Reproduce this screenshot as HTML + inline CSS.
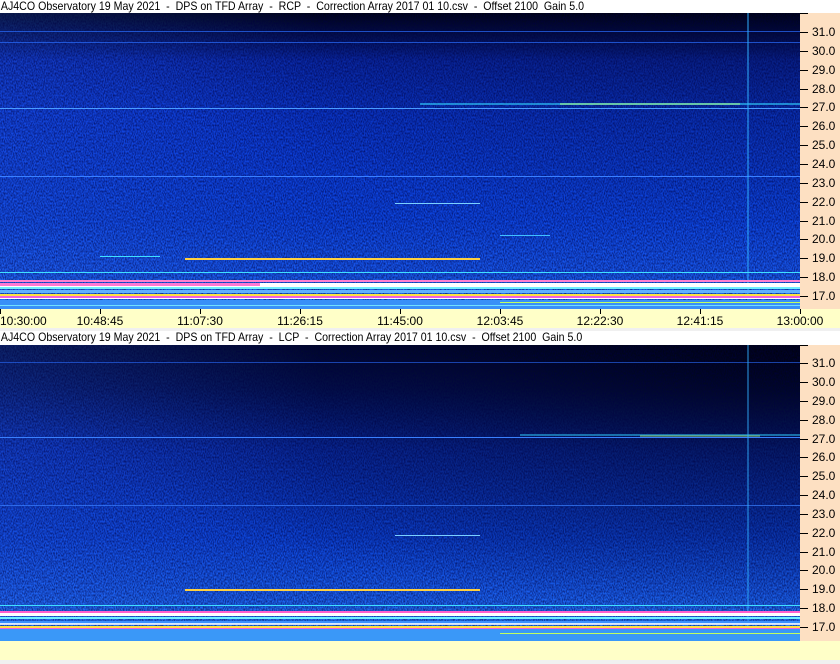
<!DOCTYPE html>
<html><head><style>
html,body{margin:0;padding:0;width:840px;height:664px;overflow:hidden;background:#f0f0f0;font-family:"Liberation Sans",Arial,sans-serif;}
.t{position:absolute;left:0;width:840px;height:13px;background:#fff;font-size:12px;line-height:13px;color:#000;white-space:pre;}
.t span{display:inline-block;padding-left:1px;transform:scaleX(0.885);transform-origin:0 0;}
.ax{position:absolute;left:800px;width:40px;background:#fde0c2;}
.lab{position:absolute;left:812px;font-size:12px;line-height:12px;color:#000;}
.tk{position:absolute;left:800px;width:8px;height:1px;background:#000;}
.time{position:absolute;left:0;width:840px;height:19px;background:#ffffc8;}
.tl{position:absolute;top:6px;font-size:12px;line-height:13px;transform:translateX(-50%);}
.vt{position:absolute;top:0;width:1px;height:5px;background:#000;}
</style></head><body>
<div class="t" style="top:0"><span>AJ4CO Observatory 19 May 2021  -  DPS on TFD Array  -  RCP  -  Correction Array 2017 01 10.csv  -  Offset 2100  Gain 5.0</span></div>

<svg style="position:absolute;left:0;top:13px" width="800" height="296">
<defs>
<linearGradient id="g1" x1="0" y1="0" x2="0" y2="1">
<stop offset="0" stop-color="#010414"/><stop offset="0.06" stop-color="#030e48"/><stop offset="0.16" stop-color="#0a2cb4"/><stop offset="0.35" stop-color="#0b3ad4"/><stop offset="0.7" stop-color="#0d46e0"/><stop offset="0.88" stop-color="#1858ec"/><stop offset="1" stop-color="#2a80f4"/>
</linearGradient>
<radialGradient id="r1" cx="1" cy="0" r="0.9" gradientTransform="scale(1,0.8)">
<stop offset="0" stop-color="#000010" stop-opacity="0.35"/><stop offset="1" stop-color="#000010" stop-opacity="0"/>
</radialGradient>
<linearGradient id="l1" x1="0" y1="0" x2="1" y2="0">
<stop offset="0" stop-color="#3070ff" stop-opacity="0.25"/><stop offset="0.4" stop-color="#3070ff" stop-opacity="0"/>
</linearGradient>
<filter id="n"><feTurbulence type="fractalNoise" baseFrequency="0.9 0.5" numOctaves="1" seed="3"/><feColorMatrix values="0 0 0 0 0  0 0 0 0 0  0 0 0 0 0.05  0 0 0 -2.2 1.5"/></filter>
</defs>
<rect width="800" height="296" fill="url(#g1)"/>
<rect width="800" height="296" fill="url(#r1)"/>
<rect width="800" height="296" fill="url(#l1)"/>
<rect width="800" height="296" filter="url(#n)" opacity="0.6"/>
<rect y="18" width="800" height="1" fill="#2a6cff" opacity=".7"/>
<rect y="29" width="800" height="1" fill="#2a6cff" opacity=".7"/>
<rect y="95" width="800" height="1" fill="#4a9cff"/>
<rect x="420" y="90" width="380" height="2" fill="#30d0ff" opacity=".6"/>
<rect x="560" y="90" width="180" height="2" fill="#b0ff80" opacity=".5"/>
<rect y="163" width="800" height="1" fill="#3a80ff"/>
<rect x="395" y="190" width="85" height="1" fill="#7ad0ff"/>
<rect x="185" y="245" width="295" height="2" fill="#ffd040"/>
<rect x="100" y="243" width="60" height="1" fill="#40e0ff"/>
<rect x="500" y="222" width="50" height="1" fill="#40c0ff"/>
<rect x="747" y="0" width="2" height="296" fill="#30b0ff" opacity=".5"/>
<rect y="259" width="800" height="1" fill="#40e0ff"/>
<rect y="267" width="800" height="2" fill="#ff80d0"/>
<rect y="270" width="800" height="4" fill="#ffffff"/>
<rect y="274" width="800" height="2" fill="#70f0ff"/>
<rect x="0" y="270" width="260" height="3" fill="#ff40c0" opacity=".7"/>
<rect y="277" width="800" height="3" fill="#60b0ff"/>
<rect y="281" width="800" height="2" fill="#ffe040"/>
<rect y="283" width="800" height="2" fill="#f060e0"/>
<rect y="285" width="800" height="1" fill="#ffffff"/>
<rect y="287" width="800" height="9" fill="#3890f8"/>
<rect x="500" y="289" width="300" height="1" fill="#c0ff60"/>
<rect y="292" width="800" height="1" fill="#70e0ff"/>
</svg>
<div class="ax" style="top:13px;height:296px"></div>
<div class="tk" style="top:13px"></div>
<div class="tk" style="top:32px"></div><div class="lab" style="top:26px">31.0</div>
<div class="tk" style="top:51px"></div><div class="lab" style="top:45px">30.0</div>
<div class="tk" style="top:70px"></div><div class="lab" style="top:64px">29.0</div>
<div class="tk" style="top:89px"></div><div class="lab" style="top:83px">28.0</div>
<div class="tk" style="top:107px"></div><div class="lab" style="top:101px">27.0</div>
<div class="tk" style="top:126px"></div><div class="lab" style="top:120px">26.0</div>
<div class="tk" style="top:145px"></div><div class="lab" style="top:139px">25.0</div>
<div class="tk" style="top:164px"></div><div class="lab" style="top:158px">24.0</div>
<div class="tk" style="top:183px"></div><div class="lab" style="top:177px">23.0</div>
<div class="tk" style="top:202px"></div><div class="lab" style="top:196px">22.0</div>
<div class="tk" style="top:221px"></div><div class="lab" style="top:215px">21.0</div>
<div class="tk" style="top:239px"></div><div class="lab" style="top:233px">20.0</div>
<div class="tk" style="top:258px"></div><div class="lab" style="top:252px">19.0</div>
<div class="tk" style="top:277px"></div><div class="lab" style="top:271px">18.0</div>
<div class="tk" style="top:296px"></div><div class="lab" style="top:290px">17.0</div>

<div class="time" style="top:309px">
<div class="vt" style="left:0"></div><div class="vt" style="left:100px"></div><div class="vt" style="left:200px"></div><div class="vt" style="left:300px"></div><div class="vt" style="left:400px"></div><div class="vt" style="left:500px"></div><div class="vt" style="left:600px"></div><div class="vt" style="left:700px"></div><div class="vt" style="left:800px"></div>
<div class="tl" style="left:0;transform:none">10:30:00</div>
<div class="tl" style="left:100px">10:48:45</div>
<div class="tl" style="left:200px">11:07:30</div>
<div class="tl" style="left:300px">11:26:15</div>
<div class="tl" style="left:400px">11:45:00</div>
<div class="tl" style="left:500px">12:03:45</div>
<div class="tl" style="left:600px">12:22:30</div>
<div class="tl" style="left:700px">12:41:15</div>
<div class="tl" style="left:800px">13:00:00</div>
</div>

<div class="t" style="top:331px;height:14px"><span>AJ4CO Observatory 19 May 2021  -  DPS on TFD Array  -  LCP  -  Correction Array 2017 01 10.csv  -  Offset 2100  Gain 5.0</span></div>

<svg style="position:absolute;left:0;top:345px" width="800" height="296">
<defs>
<linearGradient id="g2" x1="0" y1="0" x2="0" y2="1">
<stop offset="0" stop-color="#020a34"/><stop offset="0.15" stop-color="#041560"/><stop offset="0.35" stop-color="#0a30b4"/><stop offset="0.65" stop-color="#0c44d8"/><stop offset="0.85" stop-color="#1a60ee"/><stop offset="1" stop-color="#2a88f8"/>
</linearGradient>
<radialGradient id="r2" cx="1" cy="0" r="1" gradientTransform="scale(1,0.9)">
<stop offset="0" stop-color="#000008" stop-opacity="0.8"/><stop offset="0.5" stop-color="#000008" stop-opacity="0.35"/><stop offset="1" stop-color="#000008" stop-opacity="0"/>
</radialGradient>
</defs>
<rect width="800" height="296" fill="url(#g2)"/>
<rect width="800" height="296" fill="url(#r2)"/>
<rect width="800" height="296" fill="url(#l1)"/>
<rect width="800" height="296" filter="url(#n)" opacity="0.6"/>
<rect y="17" width="800" height="1" fill="#2a6cff" opacity=".6"/>
<rect y="92" width="800" height="1" fill="#3a80ff"/>
<rect x="520" y="89" width="280" height="2" fill="#30d0ff" opacity=".5"/>
<rect x="640" y="90" width="120" height="2" fill="#b0ff80" opacity=".4"/>
<rect y="160" width="800" height="1" fill="#3a80ff" opacity=".7"/>
<rect x="395" y="190" width="85" height="1" fill="#7ad0ff"/>
<rect x="185" y="244" width="295" height="2" fill="#ffd040"/>
<rect x="747" y="0" width="2" height="296" fill="#30b0ff" opacity=".45"/>
<rect y="260" width="800" height="1" fill="#40e0ff"/>
<rect y="266" width="800" height="2" fill="#ff60d0"/>
<rect y="268" width="800" height="3" fill="#ffffff"/>
<rect y="272" width="800" height="2" fill="#70f0ff"/>
<rect y="276" width="800" height="3" fill="#3a90ff"/>
<rect y="278" width="800" height="2" fill="#ffffff" opacity=".8"/>
<rect y="281" width="800" height="2" fill="#ffe040"/>
<rect y="283" width="800" height="1" fill="#f060e0"/>
<rect y="284" width="800" height="12" fill="#3a98f8"/>
<rect x="500" y="288" width="300" height="1" fill="#c0ff60"/>
</svg>
<div class="ax" style="top:345px;height:296px"></div>
<div class="tk" style="top:345px"></div>
<div class="tk" style="top:363px"></div><div class="lab" style="top:357px">31.0</div>
<div class="tk" style="top:382px"></div><div class="lab" style="top:376px">30.0</div>
<div class="tk" style="top:401px"></div><div class="lab" style="top:395px">29.0</div>
<div class="tk" style="top:420px"></div><div class="lab" style="top:414px">28.0</div>
<div class="tk" style="top:439px"></div><div class="lab" style="top:433px">27.0</div>
<div class="tk" style="top:457px"></div><div class="lab" style="top:451px">26.0</div>
<div class="tk" style="top:476px"></div><div class="lab" style="top:470px">25.0</div>
<div class="tk" style="top:495px"></div><div class="lab" style="top:489px">24.0</div>
<div class="tk" style="top:514px"></div><div class="lab" style="top:508px">23.0</div>
<div class="tk" style="top:533px"></div><div class="lab" style="top:527px">22.0</div>
<div class="tk" style="top:552px"></div><div class="lab" style="top:546px">21.0</div>
<div class="tk" style="top:570px"></div><div class="lab" style="top:564px">20.0</div>
<div class="tk" style="top:589px"></div><div class="lab" style="top:583px">19.0</div>
<div class="tk" style="top:608px"></div><div class="lab" style="top:602px">18.0</div>
<div class="tk" style="top:627px"></div><div class="lab" style="top:621px">17.0</div>

<div class="time" style="top:641px;height:19px"></div>
</body></html>
